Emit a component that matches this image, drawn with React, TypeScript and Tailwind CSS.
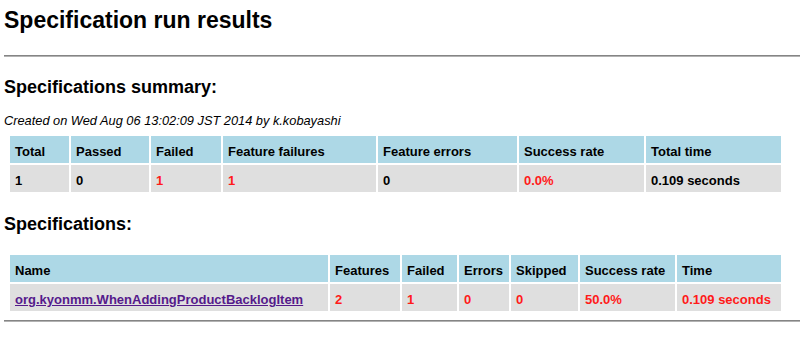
import React from 'react';

type Cell = { text: string; red?: boolean; link?: boolean };

const SUMMARY_HEAD = ['Total', 'Passed', 'Failed', 'Feature failures', 'Feature errors', 'Success rate', 'Total time'];
const SUMMARY_WIDTHS = ['w-[59px]', 'w-[78px]', 'w-[70px]', 'w-[153px]', 'w-[139px]', 'w-[125px]', 'w-[135px]'];
const SUMMARY_ROW: Cell[] = [
  { text: '1' },
  { text: '0' },
  { text: '1', red: true },
  { text: '1', red: true },
  { text: '0' },
  { text: '0.0%', red: true },
  { text: '0.109 seconds' },
];

const SPEC_HEAD = ['Name', 'Features', 'Failed', 'Errors', 'Skipped', 'Success rate', 'Time'];
const SPEC_WIDTHS = ['w-[318px]', 'w-[70px]', 'w-[55px]', 'w-[50px]', 'w-[67px]', 'w-[95px]', 'w-[104px]'];
const SPEC_ROW: Cell[] = [
  { text: 'org.kyonmm.WhenAddingProductBacklogItem', link: true },
  { text: '2', red: true },
  { text: '1', red: true },
  { text: '0', red: true },
  { text: '0', red: true },
  { text: '50.0%', red: true },
  { text: '0.109 seconds', red: true },
];

function Rule() {
  return <div className="h-[2px] border-t border-b border-t-[#858585] border-b-[#b2b2b2]" />;
}

function ResultTable({ head, widths, row }: { head: string[]; widths: string[]; row: Cell[] }) {
  return (
    <table className="ml-[4px] w-[775px] table-fixed border-separate border-spacing-[2px] text-[13px] font-bold leading-[15px]">
      <thead>
        <tr>
          {head.map((h, i) => (
            <th key={h} className={`${widths[i]} bg-[#add8e6] px-[5px] pt-[8px] pb-[4px] text-left font-bold text-black`}>
              {h}
            </th>
          ))}
        </tr>
      </thead>
      <tbody>
        <tr>
          {row.map((c, i) => (
            <td
              key={i}
              className={`bg-[#dfdfdf] px-[5px] pt-[8px] pb-[4px] whitespace-nowrap ${c.red ? 'text-[#ff1a1a]' : 'text-black'}`}
            >
              {c.link ? <a href="#" className="text-[#551a8b] underline">{c.text}</a> : c.text}
            </td>
          ))}
        </tr>
      </tbody>
    </table>
  );
}

export default function App() {
  return (
    <div className="w-[800px] h-[338px] overflow-hidden bg-white pl-[4px] text-black font-['Liberation_Sans',Arial,sans-serif]">
      <h1 className="mt-[7px] text-[23px] font-bold leading-[27px]">Specification run results</h1>
      <div className="mt-[21px]">
        <Rule />
      </div>

      <h2 className="mt-[19px] text-[18px] font-bold leading-[22px]">Specifications summary:</h2>
      <p className="mt-[15px] text-[12.8px] italic leading-[15px]">Created on Wed Aug 06 13:02:09 JST 2014 by k.kobayashi</p>
      <div className="mt-[6px]">
        <ResultTable head={SUMMARY_HEAD} widths={SUMMARY_WIDTHS} row={SUMMARY_ROW} />
      </div>

      <h2 className="mt-[19px] text-[18px] font-bold leading-[22px]">Specifications:</h2>
      <div className="mt-[18px]">
        <ResultTable head={SPEC_HEAD} widths={SPEC_WIDTHS} row={SPEC_ROW} />
      </div>
      <div className="mt-[7px]">
        <Rule />
      </div>
    </div>
  );
}
